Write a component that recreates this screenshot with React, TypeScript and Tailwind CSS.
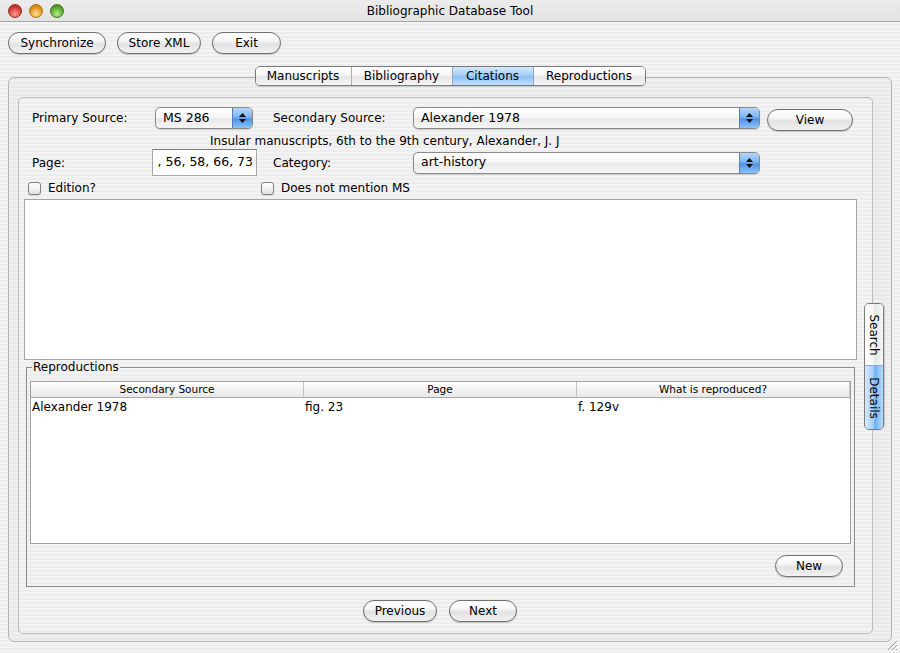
import React from "react";

const stripes =
  "bg-[repeating-linear-gradient(to_bottom,#ededed_0px,#ededed_2px,#f3f3f3_2px,#f3f3f3_4px)]";

function Btn({ children, className = "" }: { children: React.ReactNode; className?: string }) {
  return (
    <div
      className={`h-[22px] shrink-0 rounded-full border border-[#707070] bg-[linear-gradient(to_bottom,#ffffff_0%,#f6f6f6_40%,#e2e2e2_55%,#f2f2f2_100%)] shadow-[0_1px_1px_rgba(0,0,0,0.18)] flex items-center justify-center text-[12px] text-black ${className}`}
    >
      {children}
    </div>
  );
}

function Popup({ value, className = "" }: { value: string; className?: string }) {
  return (
    <div
      className={`h-[22px] shrink-0 rounded-[5px] border border-[#8a8a8a] bg-[linear-gradient(to_bottom,#ffffff_0%,#f7f7f7_45%,#e9e9e9_55%,#f6f6f6_100%)] shadow-[0_1px_1px_rgba(0,0,0,0.15)] flex items-stretch overflow-hidden ${className}`}
    >
      <div className="flex-1 flex items-center pl-[7px] text-[12.5px] text-black">{value}</div>
      <div className="w-[20px] border-l border-[#5a7fb8] bg-[linear-gradient(to_bottom,#b6d6fb_0%,#7fb4f0_45%,#4f93e6_55%,#8cc2f7_100%)] flex flex-col items-center justify-center gap-[2px]">
        <svg width="7" height="4" viewBox="0 0 7 4">
          <path d="M3.5 0 L7 4 L0 4 Z" fill="#111" />
        </svg>
        <svg width="7" height="4" viewBox="0 0 7 4">
          <path d="M0 0 L7 0 L3.5 4 Z" fill="#111" />
        </svg>
      </div>
    </div>
  );
}

function Check({ label }: { label: string }) {
  return (
    <div className="flex items-center">
      <div className="w-[13px] h-[13px] rounded-[3px] border border-[#808080] bg-[linear-gradient(to_bottom,#ffffff_0%,#f3f3f3_50%,#e0e0e0_100%)] shadow-[0_1px_1px_rgba(0,0,0,0.12)]" />
      <span className="ml-[7px] text-[12px] leading-[14px]">{label}</span>
    </div>
  );
}

function Light({ from, to, border }: { from: string; to: string; border: string }) {
  return (
    <div
      className="w-[14px] h-[14px] rounded-full border"
      style={{
        borderColor: border,
        background: `radial-gradient(circle at 50% 75%, ${to} 0%, ${from} 70%)`,
      }}
    />
  );
}

export default function App() {
  return (
    <div
      className={`w-[900px] h-[653px] overflow-hidden relative ${stripes} font-['DejaVu_Sans','Liberation_Sans',sans-serif] text-black`}
    >
      {/* title bar */}
      <div className="h-[22px] relative flex items-center justify-center border-b border-[#a8a8a8] bg-[linear-gradient(to_bottom,#ececec_0%,#e2e2e2_100%)]">
        <div className="absolute left-[8px] top-[4px] flex gap-[7px]">
          <Light from="#c92c24" to="#ff9c92" border="#9a2a24" />
          <Light from="#d98a10" to="#ffe38a" border="#a8701a" />
          <Light from="#4c9a22" to="#b8f08a" border="#3f7a22" />
        </div>
        <span className="text-[12px]">Bibliographic Database Tool</span>
      </div>

      {/* toolbar */}
      <div className="flex gap-[11px] pl-[8px] pt-[10px]">
        <Btn className="w-[98px]">Synchronize</Btn>
        <Btn className="w-[84px]">Store XML</Btn>
        <Btn className="w-[69px]">Exit</Btn>
      </div>

      {/* tab view */}
      <div className="ml-[8px] mt-[12px] w-[884px] flex flex-col">
        <div className="relative z-10 flex justify-center h-[20px]">
          <div className="flex h-[20px] rounded-[5px] border border-[#7a7a7a] overflow-hidden shadow-[0_1px_1px_rgba(0,0,0,0.15)] text-[12px]">
            <div className="w-[96px] flex items-center justify-center border-r border-[#b0b0b0] bg-[linear-gradient(to_bottom,#ffffff_0%,#f6f6f6_45%,#e6e6e6_55%,#f6f6f6_100%)]">
              Manuscripts
            </div>
            <div className="w-[101px] flex items-center justify-center border-r border-[#8aa8d0] bg-[linear-gradient(to_bottom,#ffffff_0%,#f6f6f6_45%,#e6e6e6_55%,#f6f6f6_100%)]">
              Bibliography
            </div>
            <div className="w-[81px] flex items-center justify-center border-r border-[#8aa8d0] bg-[linear-gradient(to_bottom,#d4e8fd_0%,#a9d0f8_45%,#8cc0f5_55%,#c3e2fd_100%)]">
              Citations
            </div>
            <div className="w-[111px] flex items-center justify-center bg-[linear-gradient(to_bottom,#ffffff_0%,#f6f6f6_45%,#e6e6e6_55%,#f6f6f6_100%)]">
              Reproductions
            </div>
          </div>
        </div>

        <div className="-mt-[9px] h-[565px] rounded-[6px] border border-[#b4b4b4] bg-[repeating-linear-gradient(to_bottom,#e9e9e9_0px,#e9e9e9_2px,#efefef_2px,#efefef_4px)] pl-[9px] pt-[19px]">
          {/* inner panel */}
          <div className={`relative w-[855px] h-[537px] rounded-[5px] border border-[#bdbdbd] ${stripes} flex flex-col`}>
            {/* row 1 */}
            <div className="mt-[9px] pl-[13px] flex items-center h-[22px]">
              <div className="w-[123px] text-[12px]">Primary Source:</div>
              <Popup value="MS 286" className="w-[98px]" />
              <div className="ml-[20px] w-[140px] text-[12px]">Secondary Source:</div>
              <Popup value="Alexander 1978" className="w-[347px]" />
              <Btn className="ml-[7px] mt-[4px] w-[86px]">View</Btn>
            </div>
            {/* row 2 */}
            <div className="mt-[5px] pl-[191px] h-[14px] text-[12px] leading-[14px]">
              Insular manuscripts, 6th to the 9th century, Alexander, J. J
            </div>
            {/* row 3 */}
            <div className="mt-[1px] pl-[13px] flex items-center h-[27px]">
              <div className="w-[120px] text-[12px]">Page:</div>
              <div className="w-[105px] h-[27px] bg-white border border-[#a8a8a8] border-t-[#7a7a7a] flex items-center justify-end pr-[3px] text-[12.5px] overflow-hidden whitespace-nowrap">
                , 56, 58, 66, 73
              </div>
              <div className="ml-[16px] w-[140px] text-[12px]">Category:</div>
              <Popup value="art-history" className="w-[347px]" />
            </div>
            {/* row 4 */}
            <div className="mt-[5px] pl-[9px] flex h-[14px]">
              <div className="w-[233px]">
                <Check label="Edition?" />
              </div>
              <Check label="Does not mention MS" />
            </div>
            {/* text area */}
            <div className="mt-[4px] ml-[5px] w-[833px] h-[161px] bg-white border border-[#a6a6a6]" />

            {/* reproductions group */}
            <fieldset className="mt-[1px] ml-[7px] w-[829px] border border-[#8e8e8e] rounded-none flex flex-col">
              <legend className="ml-[5px] px-[1px] text-[12px] leading-[13px]">Reproductions</legend>
              <div className="mt-[7px] ml-[3px] w-[821px] h-[163px] bg-white border border-[#a0a0a0] flex flex-col">
                <div className="flex h-[16px] border-b border-[#a8a8a8] bg-[linear-gradient(to_bottom,#ffffff_0%,#f3f3f3_50%,#e8e8e8_100%)] text-[10.5px]">
                  <div className="w-[273px] border-r border-[#c4c4c4] flex items-center justify-center">Secondary Source</div>
                  <div className="w-[273px] border-r border-[#c4c4c4] flex items-center justify-center">Page</div>
                  <div className="flex-1 flex items-center justify-center border-r border-[#c4c4c4]">What is reproduced?</div>
                </div>
                <div className="flex h-[17px] items-center text-[12px]">
                  <div className="w-[273px] pl-[1px]">Alexander 1978</div>
                  <div className="w-[273px] pl-[1px]">fig. 23</div>
                  <div className="flex-1 pl-[1px]">f. 129v</div>
                </div>
              </div>
              <div className="mt-[11px] mb-[9px] self-end mr-[11px]">
                <Btn className="w-[68px]">New</Btn>
              </div>
            </fieldset>

            {/* prev / next */}
            <div className="mt-[13px] pl-[344px] flex gap-[12px]">
              <Btn className="w-[74px]">Previous</Btn>
              <Btn className="w-[68px]">Next</Btn>
            </div>

            {/* side tabs */}
            <div className="absolute left-[845px] top-[205px] w-[20px] h-[127px] flex flex-col rounded-[5px] border border-[#7a7a7a] overflow-hidden shadow-[1px_0_1px_rgba(0,0,0,0.15)] text-[12px]">
              <div className="h-[62px] border-b border-[#8aa8d0] flex items-center justify-center bg-[linear-gradient(to_right,#ffffff_0%,#f6f6f6_45%,#e6e6e6_55%,#f6f6f6_100%)]">
                <span className="rotate-90 whitespace-nowrap inline-block">Search</span>
              </div>
              <div className="flex-1 flex items-center justify-center bg-[linear-gradient(to_right,#d4e8fd_0%,#a9d0f8_45%,#6fb0f2_55%,#b8dcfc_100%)]">
                <span className="rotate-90 whitespace-nowrap inline-block">Details</span>
              </div>
            </div>
          </div>
        </div>
      </div>

      {/* resize grip */}
      <svg className="absolute right-[2px] bottom-[2px]" width="11" height="11" viewBox="0 0 11 11">
        <path d="M1 10 L10 1 M5 10 L10 5 M9 10 L10 9" stroke="#9a9a9a" strokeWidth="1" />
      </svg>
    </div>
  );
}
